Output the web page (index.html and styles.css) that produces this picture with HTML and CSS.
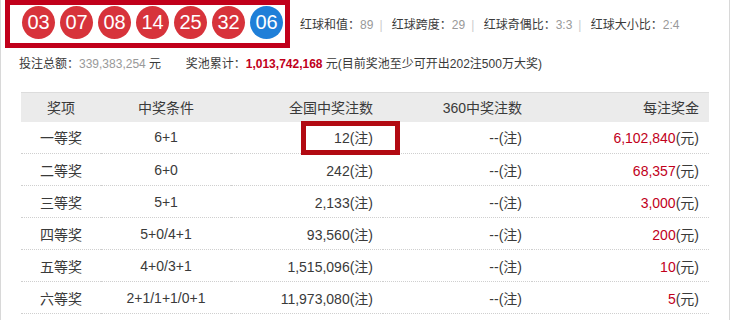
FILE: index.html
```html
<!DOCTYPE html>
<html lang="zh-CN">

<head>
    <meta charset="UTF-8" />
    <title>双色球开奖详情</title>
    <link rel="stylesheet" href="styles.css">
</head>

<body>
    <div class="page">
        <div class="draw">
            <div class="balls mark">
                <span class="ball">03</span>
                <span class="ball">07</span>
                <span class="ball">08</span>
                <span class="ball">14</span>
                <span class="ball">25</span>
                <span class="ball">32</span>
                <span class="ball blue">06</span>
            </div>
            <div class="stats">
                红球和值：<span class="val">89</span><span class="sep">|</span>
                红球跨度：<span class="val">29</span><span class="sep">|</span>
                红球奇偶比：<span class="val">3:3</span><span class="sep">|</span>
                红球大小比：<span class="val">2:4</span>
            </div>
        </div>

        <div class="pool">
            投注总额：<span class="val">339,383,254</span> 元
            <span class="pool-gap"></span>
            奖池累计：<b class="money">1,013,742,168</b> 元(目前奖池至少可开出202注500万大奖)
        </div>

        <table class="prize">
            <thead>
                <tr>
                    <th class="c1">奖项</th>
                    <th class="c2">中奖条件</th>
                    <th class="c3">全国中奖注数</th>
                    <th class="c4">360中奖注数</th>
                    <th class="c5">每注奖金</th>
                </tr>
            </thead>
            <tbody>
                <tr>
                    <td class="c1">一等奖</td>
                    <td class="c2">6+1</td>
                    <td class="c3"><span class="hl"></span>12(注)</td>
                    <td class="c4">--(注)</td>
                    <td class="c5"><span class="red">6,102,840</span>(元)</td>
                </tr>
                <tr>
                    <td class="c1">二等奖</td>
                    <td class="c2">6+0</td>
                    <td class="c3">242(注)</td>
                    <td class="c4">--(注)</td>
                    <td class="c5"><span class="red">68,357</span>(元)</td>
                </tr>
                <tr>
                    <td class="c1">三等奖</td>
                    <td class="c2">5+1</td>
                    <td class="c3">2,133(注)</td>
                    <td class="c4">--(注)</td>
                    <td class="c5"><span class="red">3,000</span>(元)</td>
                </tr>
                <tr>
                    <td class="c1">四等奖</td>
                    <td class="c2">5+0/4+1</td>
                    <td class="c3">93,560(注)</td>
                    <td class="c4">--(注)</td>
                    <td class="c5"><span class="red">200</span>(元)</td>
                </tr>
                <tr>
                    <td class="c1">五等奖</td>
                    <td class="c2">4+0/3+1</td>
                    <td class="c3">1,515,096(注)</td>
                    <td class="c4">--(注)</td>
                    <td class="c5"><span class="red">10</span>(元)</td>
                </tr>
                <tr>
                    <td class="c1">六等奖</td>
                    <td class="c2">2+1/1+1/0+1</td>
                    <td class="c3">11,973,080(注)</td>
                    <td class="c4">--(注)</td>
                    <td class="c5"><span class="red">5</span>(元)</td>
                </tr>
            </tbody>
        </table>
    </div>
</body>

</html>
```

FILE: styles.css
```css
body {
    margin: 0;
    font-family: "Liberation Sans", "Noto Sans CJK SC", sans-serif;
    color: #3a3a3a;
    background: #fff;
}

.page {
    width: 730px;
    height: 320px;
    box-sizing: border-box;
    border-left: 1px solid #d8d8d8;
    border-right: 1px solid #d8d8d8;
    overflow: hidden;
}

.draw {
    display: flex;
    align-items: center;
    height: 48px;
}

.mark {
    border: 5px solid #c1001b;
}

.balls {
    display: flex;
    gap: 5px;
    margin-left: 4px;
    padding: 1px 2px 4px 12px;
    align-self: flex-start;
}

.ball {
    width: 33px;
    height: 33px;
    border-radius: 50%;
    background: #d7333b;
    color: #fff;
    font-size: 20px;
    line-height: 33px;
    text-align: center;
}

.ball.blue {
    background: #1f7fd8;
}

.stats {
    margin-left: 10px;
    font-size: 12px;
    margin-top: -2px;
}

.val {
    color: #999;
}

.sep {
    color: #ccc;
    margin: 0 6px;
}

.pool {
    font-size: 12px;
    padding-left: 18px;
    margin-top: 8px;
    height: 16px;
    line-height: 16px;
}

.pool-gap {
    display: inline-block;
    width: 18px;
}

.money {
    color: #c1001b;
}

.prize {
    margin: 20px 0 0 20px;
    width: 688px;
    border-collapse: collapse;
    table-layout: fixed;
    font-size: 14px;
}

.prize th {
    background: #ebebeb;
    border-top: 1px solid #dcdcdc;
    font-weight: normal;
    height: 29px;
    padding: 0 10px;
}

.prize td {
    height: 32px;
    padding: 0 10px;
    border-bottom: 1px dotted #cfcfcf;
}

.prize .c1 {
    width: 80px;
    text-align: center;
}

.prize .c2 {
    width: 130px;
    text-align: center;
}

.prize .c3 {
    width: 152px;
    text-align: right;
    position: relative;
}

.prize .c4 {
    width: 149px;
    text-align: right;
}

.prize .c5 {
    text-align: right;
}

.prize .c1,
.prize .c2,
.prize .c3,
.prize .c4,
.prize .c5 {
    box-sizing: border-box;
}

.red {
    color: #c1001b;
}

.hl {
    position: absolute;
    left: 70px;
    top: -1px;
    width: 99px;
    height: 34px;
    box-sizing: border-box;
    border: 5px solid #b20a12;
}
```
